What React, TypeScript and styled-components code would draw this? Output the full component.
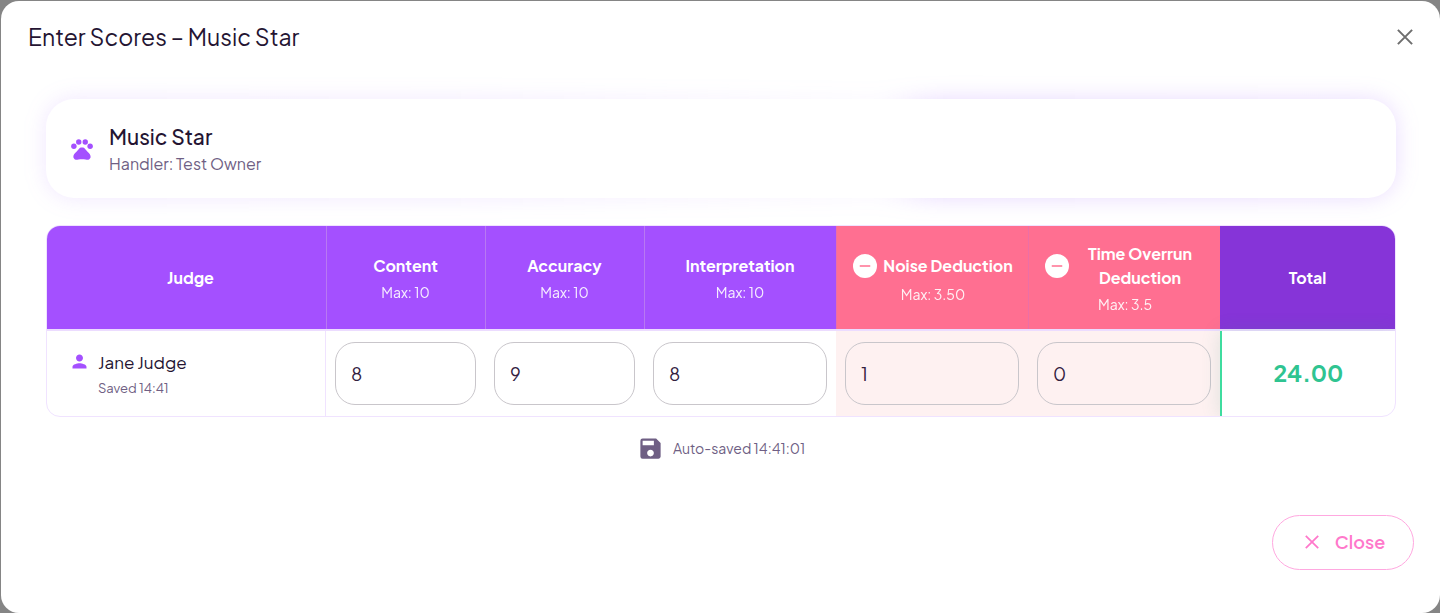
import React, { useState } from 'react';
import styled, { createGlobalStyle, css } from 'styled-components';
import { MdPets, MdPerson, MdSave, MdRemove } from 'react-icons/md';

const GlobalStyle = createGlobalStyle`
  *, *::before, *::after { box-sizing: border-box; }
  body {
    margin: 0;
    background: #858585;
    font-family: 'Plus Jakarta Sans', Inter, 'Liberation Sans', sans-serif;
    color: #241432;
  }
`;

const Dialog = styled.section`
  margin: 1px 0 0 1px;
  min-height: calc(100vh - 1px);
  display: flex;
  flex-direction: column;
  background: #fff;
  border-radius: 18px;
`;

const Header = styled.header`
  display: flex;
  align-items: center;
  justify-content: space-between;
  height: 71px;
  padding: 0 27px;
`;

const Title = styled.h1`
  margin: 0;
  font-size: 23px;
  line-height: 32px;
  font-weight: 400;
`;

const IconButton = styled.button`
  display: flex;
  padding: 0;
  border: 0;
  background: none;
  color: #6e6e6e;
  cursor: pointer;
`;

const Body = styled.div`
  flex: 1;
  display: flex;
  flex-direction: column;
  padding: 27px 44px 0 45px;
`;

const Card = styled.div`
  position: relative;
  z-index: 0;
  display: flex;
  align-items: center;
  gap: 14px;
  height: 99px;
  padding: 1px 23px 0;
  border-radius: 28px;

  &::before,
  &::after {
    content: '';
    position: absolute;
    inset: 0;
    border-radius: 28px;
  }
  &::before {
    z-index: -2;
    filter: blur(11px);
    background: linear-gradient(
      90deg,
      rgba(150, 80, 255, 0.14) 0%,
      rgba(150, 80, 255, 0.12) 30%,
      rgba(150, 80, 255, 0.04) 62%,
      rgba(150, 80, 255, 0.22) 66%,
      rgba(150, 80, 255, 0.2) 100%
    );
  }
  &::after {
    z-index: -1;
    background: #fff;
  }
`;

const PetName = styled.h2`
  margin: 0;
  font-size: 21px;
  line-height: 30px;
  font-weight: 500;
`;

const Handler = styled.p`
  margin: 0;
  font-size: 16px;
  line-height: 24px;
  color: #6f5f84;
`;

const TableFrame = styled.div`
  margin-top: 27px;
  overflow: hidden;
  border: 1px solid #f0e3ff;
  border-radius: 14px;
`;

const Table = styled.table`
  width: 100%;
  table-layout: fixed;
  border-collapse: separate;
  border-spacing: 0;
`;

const Col = styled.col<{ $w: number }>`
  width: ${({ $w }) => $w}px;
`;

type Tone = 'score' | 'deduction' | 'total';
const headColor: Record<Tone, string> = { score: '#a450ff', deduction: '#ff6f91', total: '#8634d8' };
const dividerColor: Record<Tone, string> = { score: '#b878f2', deduction: '#ec6fa6', total: '#8634d8' };

const HeadCell = styled.th<{ $tone: Tone; $divided?: boolean }>`
  height: 105px;
  padding: 2px 8px 0;
  vertical-align: middle;
  background: ${({ $tone }) => headColor[$tone]};
  background-clip: padding-box;
  border-bottom: 2px solid #ecdcff;
  box-shadow: ${({ $tone, $divided }) => ($divided ? `inset 1px 0 ${dividerColor[$tone]}` : 'none')};
  color: #fff;
  font-size: 16px;
  line-height: 24px;
  font-weight: 700;
  ${({ $tone }) => $tone === 'deduction' && css`padding: 2px 15px 0 17px;`}
  ${({ $tone }) => $tone === 'total' && css`padding: 0;`}
`;

const JudgeHeadCell = styled(HeadCell)`
  padding: 0 0 0 8px;
`;

const DeductionTitle = styled.div`
  display: flex;
  align-items: center;
  justify-content: center;
  gap: 6px;
  min-height: 28px;
`;

const DeductionName = styled.span<{ $wrap?: boolean }>`
  white-space: ${({ $wrap }) => ($wrap ? 'normal' : 'nowrap')};
  ${({ $wrap }) => $wrap && css`flex: 1;`}
`;

const MinusBadge = styled.span`
  display: flex;
  align-items: center;
  justify-content: center;
  flex: none;
  width: 24px;
  height: 24px;
  border-radius: 50%;
  background: #fff;
  color: #ff6f91;
`;

const Max = styled.div`
  margin-top: 2px;
  font-size: 14px;
  line-height: 24px;
  font-weight: 400;
  opacity: 0.9;
`;

const Cell = styled.td<{ $tone?: Tone }>`
  height: 85px;
  padding: 0 9px;
  vertical-align: middle;
  ${({ $tone }) => $tone === 'deduction' && css`background: #fef1f1;`}
  ${({ $tone }) =>
    $tone === 'total' &&
    css`
      position: relative;
      padding: 0 9px 2px;
      border-left: 2px solid #3fdc9f;
      box-shadow: 0 0 18px rgba(47, 150, 120, 0.16);
      text-align: center;
    `}
`;

const JudgeCell = styled(Cell)`
  padding: 3px 22px 0;
  border-right: 1px solid #f0e3ff;
`;

const Judge = styled.div`
  display: flex;
  gap: 8px;
`;

const JudgeIcon = styled.span`
  display: flex;
  align-items: center;
  height: 24px;
  color: #a450ff;
`;

const JudgeName = styled.div`
  font-size: 17px;
  line-height: 26px;
`;

const SavedAt = styled.div`
  font-size: 13px;
  line-height: 26px;
  color: #6f5f84;
`;

const ScoreInput = styled.input`
  display: block;
  width: 100%;
  height: 63px;
  padding: 0 15px;
  border: 1px solid #c9c6cb;
  border-radius: 20px;
  background: transparent;
  color: #33213f;
  font: 400 18px/24px 'Plus Jakarta Sans', Inter, 'Liberation Sans', sans-serif;
`;

const Total = styled.output`
  display: block;
  font-size: 23px;
  line-height: 32px;
  font-weight: 700;
  color: #2fc491;
`;

const SaveStatus = styled.div`
  display: flex;
  align-items: center;
  justify-content: center;
  gap: 9px;
  margin-top: 17px;
  font-size: 14px;
  line-height: 28px;
  color: #6f5f84;
`;

const Footer = styled.footer`
  display: flex;
  justify-content: flex-end;
  padding: 0 26px 43px;
`;

const CloseButton = styled.button`
  display: flex;
  align-items: center;
  justify-content: center;
  gap: 16px;
  width: 142px;
  height: 55px;
  padding: 0 0 2px 4px;
  border: 1px solid #ffa8e0;
  border-radius: 28px;
  background: #fff;
  color: #ff78cb;
  font: 600 18px/24px 'Plus Jakarta Sans', Inter, 'Liberation Sans', sans-serif;
  cursor: pointer;
`;

const CrossIcon = ({ size }: { size: number }) => (
  <svg width={size} height={size} viewBox="0 0 16 16" fill="none" stroke="currentColor" strokeWidth="2" aria-hidden="true">
    <path d="M0.9 0.9 15.1 15.1M15.1 0.9 0.9 15.1" />
  </svg>
);

const scores = [
  { name: 'Content', max: '10', value: '8', width: 159, deduction: false },
  { name: 'Accuracy', max: '10', value: '9', width: 159, deduction: false },
  { name: 'Interpretation', max: '10', value: '8', width: 192, deduction: false },
  { name: 'Noise Deduction', max: '3.50', value: '1', width: 192, deduction: true },
  { name: 'Time Overrun Deduction', max: '3.5', value: '0', width: 192, deduction: true },
];

export default function App() {
  const [values, setValues] = useState(scores.map((s) => s.value));
  const total = scores.reduce((sum, s, i) => sum + (s.deduction ? -1 : 1) * (Number(values[i]) || 0), 0);

  return (
    <>
      <GlobalStyle />
      <Dialog role="dialog" aria-labelledby="dialog-title">
        <Header>
          <Title id="dialog-title">Enter Scores – Music Star</Title>
          <IconButton type="button" aria-label="Close dialog">
            <CrossIcon size={16} />
          </IconButton>
        </Header>
        <Body>
          <Card>
            <MdPets size={26} color="#a450ff" />
            <div>
              <PetName>Music Star</PetName>
              <Handler>Handler: Test Owner</Handler>
            </div>
          </Card>
          <TableFrame>
            <Table>
              <colgroup>
                <Col $w={279} />
                {scores.map((s) => (
                  <Col key={s.name} $w={s.width} />
                ))}
                <Col $w={175} />
              </colgroup>
              <thead>
                <tr>
                  <JudgeHeadCell scope="col" $tone="score">Judge</JudgeHeadCell>
                  {scores.map((s) => (
                    <HeadCell key={s.name} scope="col" $tone={s.deduction ? 'deduction' : 'score'} $divided>
                      {s.deduction ? (
                        <DeductionTitle>
                          <MinusBadge><MdRemove size={18} /></MinusBadge>
                          <DeductionName $wrap={s.name.length > 16}>{s.name}</DeductionName>
                        </DeductionTitle>
                      ) : (
                        s.name
                      )}
                      <Max>Max: {s.max}</Max>
                    </HeadCell>
                  ))}
                  <HeadCell scope="col" $tone="total">Total</HeadCell>
                </tr>
              </thead>
              <tbody>
                <tr>
                  <JudgeCell>
                    <Judge>
                      <JudgeIcon><MdPerson size={21} /></JudgeIcon>
                      <div>
                        <JudgeName>Jane Judge</JudgeName>
                        <SavedAt>Saved 14:41</SavedAt>
                      </div>
                    </Judge>
                  </JudgeCell>
                  {scores.map((s, i) => (
                    <Cell key={s.name} $tone={s.deduction ? 'deduction' : 'score'}>
                      <ScoreInput
                        aria-label={s.name}
                        inputMode="decimal"
                        value={values[i]}
                        onChange={(e) => setValues(values.map((v, j) => (j === i ? e.target.value : v)))}
                      />
                    </Cell>
                  ))}
                  <Cell $tone="total">
                    <Total>{total.toFixed(2)}</Total>
                  </Cell>
                </tr>
              </tbody>
            </Table>
          </TableFrame>
          <SaveStatus>
            <MdSave size={27} />
            Auto-saved 14:41:01
          </SaveStatus>
        </Body>
        <Footer>
          <CloseButton type="button">
            <CrossIcon size={14} />
            Close
          </CloseButton>
        </Footer>
      </Dialog>
    </>
  );
}
